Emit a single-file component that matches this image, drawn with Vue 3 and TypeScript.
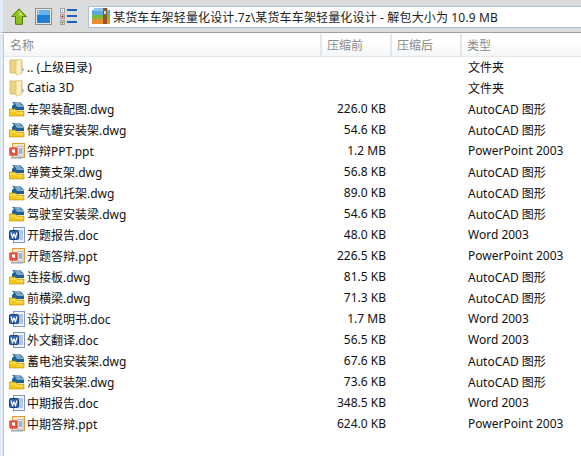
<script setup lang="ts">
type Kind = 'folder' | 'dwg' | 'ppt' | 'doc'
interface Row { name: string; size: string; type: string; kind: Kind }
const A = 'AutoCAD 图形'
const P = 'PowerPoint 2003'
const W = 'Word 2003'
const rows: Row[] = [
  { name: '.. (上级目录)', size: '', type: '文件夹', kind: 'folder' },
  { name: 'Catia 3D', size: '', type: '文件夹', kind: 'folder' },
  { name: '车架装配图.dwg', size: '226.0 KB', type: A, kind: 'dwg' },
  { name: '储气罐安装架.dwg', size: '54.6 KB', type: A, kind: 'dwg' },
  { name: '答辩PPT.ppt', size: '1.2 MB', type: P, kind: 'ppt' },
  { name: '弹簧支架.dwg', size: '56.8 KB', type: A, kind: 'dwg' },
  { name: '发动机托架.dwg', size: '89.0 KB', type: A, kind: 'dwg' },
  { name: '驾驶室安装梁.dwg', size: '54.6 KB', type: A, kind: 'dwg' },
  { name: '开题报告.doc', size: '48.0 KB', type: W, kind: 'doc' },
  { name: '开题答辩.ppt', size: '226.5 KB', type: P, kind: 'ppt' },
  { name: '连接板.dwg', size: '81.5 KB', type: A, kind: 'dwg' },
  { name: '前横梁.dwg', size: '71.3 KB', type: A, kind: 'dwg' },
  { name: '设计说明书.doc', size: '1.7 MB', type: W, kind: 'doc' },
  { name: '外文翻译.doc', size: '56.5 KB', type: W, kind: 'doc' },
  { name: '蓄电池安装架.dwg', size: '67.6 KB', type: A, kind: 'dwg' },
  { name: '油箱安装架.dwg', size: '73.6 KB', type: A, kind: 'dwg' },
  { name: '中期报告.doc', size: '348.5 KB', type: W, kind: 'doc' },
  { name: '中期答辩.ppt', size: '624.0 KB', type: P, kind: 'ppt' },
]
</script>

<template>
  <div class="win">
    <div class="toolbar">
      <svg class="up" width="16" height="17" viewBox="0 0 16 17">
        <path d="M8 0.8 L15.4 8.5 H11.5 V16.3 H4.5 V8.5 H0.6 Z" fill="#8cc21a" stroke="#4f7a0c" stroke-width="1" />
        <path d="M8 2.5 L12.5 7.5 H8 Z" fill="#c4e668" />
      </svg>
      <svg class="desk" width="17" height="17" viewBox="0 0 17 17">
        <rect x="0.5" y="0.5" width="16" height="16" fill="#e8e8e8" stroke="#8f8f8f" />
        <rect x="2" y="2" width="13" height="13" fill="#1f7fd0" />
        <rect x="2" y="2" width="13" height="5" fill="#63b2ea" />
        <rect x="3" y="3" width="1" height="1" fill="#fff" />
        <rect x="3" y="5" width="1" height="1" fill="#fff" />
      </svg>
      <svg class="list" width="17" height="17" viewBox="0 0 17 17">
        <rect x="0.5" y="0.5" width="4" height="4" fill="#fff" stroke="#a0a0a0" />
        <rect x="2" y="2" width="1" height="1" fill="#1d5fae" />
        <rect x="0.5" y="6.5" width="4" height="4" fill="#fff" stroke="#a0a0a0" />
        <rect x="1.5" y="7.5" width="2" height="2" fill="#8c1c1c" />
        <rect x="0.5" y="12.5" width="4" height="4" fill="#fff" stroke="#a0a0a0" />
        <rect x="1.5" y="13.5" width="2" height="2" fill="#5f6e1e" />
        <rect x="7" y="1" width="10" height="2" fill="#1d62b4" />
        <rect x="7" y="7" width="10" height="2" fill="#1d62b4" />
        <rect x="7" y="13" width="10" height="2" fill="#1d62b4" />
      </svg>
      <div class="path">
        <svg class="rar" width="18" height="17" viewBox="0 0 18 17">
          <rect x="0" y="2" width="18" height="5" fill="#5aa8e0" />
          <rect x="2" y="0" width="14" height="3" fill="#8cc6ee" />
          <rect x="0" y="7" width="18" height="4" fill="#7cb83e" />
          <rect x="0" y="11" width="18" height="5" fill="#ec8f30" />
          <rect x="11" y="0" width="4" height="16" fill="#8a5a2a" />
          <rect x="12" y="3" width="2" height="3" fill="#e8d8b0" />
        </svg>
        <span>某货车车架轻量化设计.7z\某货车车架轻量化设计 - 解包大小为 10.9 MB</span>
      </div>
    </div>
    <div class="panel">
      <div class="head">
        <div class="c-name">名称</div>
        <div class="c-size">压缩前</div>
        <div class="c-packed">压缩后</div>
        <div class="c-type">类型</div>
      </div>
      <div class="body">
        <div v-for="r in rows" :key="r.name" class="row">
          <div class="name">
            <svg v-if="r.kind === 'folder'" width="16" height="18" viewBox="0 0 16 18">
              <path d="M1 2 H13 V15 H1 Z" fill="#ecd384" stroke="#cdb567" stroke-width="0.8" />
              <path d="M7 2.5 L12.5 1 V16 L7 17 Z" fill="#fbf0bd" stroke="#d4bd72" stroke-width="0.6" />
              <rect x="13.5" y="10" width="1" height="3" fill="#58a0d8" />
            </svg>
            <svg v-else-if="r.kind === 'dwg'" width="16" height="16" viewBox="0 0 16 16">
              <path d="M3 1 H11 L15 5 V9 H3 Z" fill="#1f5f96" />
              <path d="M5 1 H11 L12 4 H15 V6 H8 Z" fill="#7fa9c8" />
              <path d="M2 2 L4 4 M4 2 L2 4 M3 1 V5 M1 3 H5" stroke="#fff" stroke-width="1" />
              <path d="M0 15 V8 H6 L9 10 H15 V15 Z" fill="#f5c816" stroke="#b98f0e" stroke-width="0.6" />
              <path d="M1 10 H6 L9 12 H14" stroke="#fbe88a" fill="none" />
            </svg>
            <svg v-else-if="r.kind === 'ppt'" width="16" height="16" viewBox="0 0 16 16">
              <rect x="3.5" y="0.5" width="12" height="14" fill="#f6e6c4" stroke="#e09a3a" />
              <rect x="9" y="3.5" width="5" height="9.5" fill="#eef2f8" stroke="#8ea4c2" stroke-width="0.6" />
              <path d="M10 6 H13 M10 8 H13 M10 10 H13" stroke="#5d6f8f" />
              <rect x="0.5" y="4.5" width="8" height="8" rx="1" fill="#e2533c" stroke="#c9806f" />
              <path d="M3 6.5 H6 V10 H4.5 L3 8.5 Z" fill="#fff" />
              <rect x="2" y="14" width="12" height="1.5" fill="#9aa6b8" />
            </svg>
            <svg v-else width="16" height="16" viewBox="0 0 16 16">
              <rect x="4.5" y="0.5" width="11" height="15" fill="#eef3fa" stroke="#7f9ac4" />
              <path d="M10 4 H14 M10 6 H14 M10 8 H14 M10 10 H14 M10 12 H14" stroke="#7f9ac4" />
              <rect x="0.5" y="3.5" width="9" height="9" rx="1" fill="#2c62b4" stroke="#173f80" />
              <path d="M2 5.5 L3.5 10.5 L5 7 L6.5 10.5 L8 5.5" fill="none" stroke="#fff" stroke-width="1.2" />
            </svg>
            <span>{{ r.name }}</span>
          </div>
          <div class="size">{{ r.size }}</div>
          <div class="type">{{ r.type }}</div>
        </div>
      </div>
    </div>
  </div>
</template>

<style>
html, body { margin: 0; background: #fff; }
</style>

<style scoped>
.win {
  width: 581px;
  height: 456px;
  overflow: hidden;
  font-family: "Noto Sans", "Noto Sans CJK SC", sans-serif;
  font-size: 12px;
  color: #111;
  background: #fff;
}
.toolbar {
  height: 33px;
  box-sizing: border-box;
  display: flex;
  align-items: center;
  background: #dcdcdc;
  border-bottom: 1px solid #9f9f9f;
  border-left: 3px solid #e3ecf6;
  padding: 1px 0 0 8px;
}
.up { margin-right: 8px; flex: none; }
.desk { margin-right: 8px; flex: none; }
.list { margin-right: 11px; flex: none; }
.path {
  flex: 1;
  height: 22px;
  box-sizing: border-box;
  display: flex;
  align-items: center;
  gap: 3px;
  padding-left: 3px;
  background: #fff;
  border: 1px solid #a9c3dc;
  border-right: 0;
  font-size: 12px;
  letter-spacing: 0.15px;
  color: #222;
  white-space: nowrap;
}
.panel {
  height: 423px;
  margin-left: 3px;
  border-left: 1px solid #b9c9dc;
  box-shadow: -3px 0 0 #e3ecf6;
}
.head {
  height: 22px;
  margin-top: 1px;
  display: grid;
  grid-template-columns: 318px 70px 70px 1fr;
  align-items: stretch;
  color: #8a8a8a;
  background: linear-gradient(#fff 0%, #fff 45%, #f4f5f6 100%);
  border-bottom: 1px solid #e4e7ea;
  line-height: 23px;
}
.head > div { padding-left: 5px; border-right: 2px solid #e4e7ea; }
.head > .c-name { padding-left: 6px; }
.head > div:last-child { border-right: 0; }
.row {
  height: 21px;
  box-sizing: border-box;
  padding-bottom: 2px;
  display: grid;
  grid-template-columns: 318px 64px 1fr;
  align-items: center;
  white-space: nowrap;
}
.name { display: flex; align-items: center; gap: 2px; padding-left: 5px; }
.name svg { flex: none; }
.size { text-align: right; }
.type { padding-left: 82px; }
</style>
